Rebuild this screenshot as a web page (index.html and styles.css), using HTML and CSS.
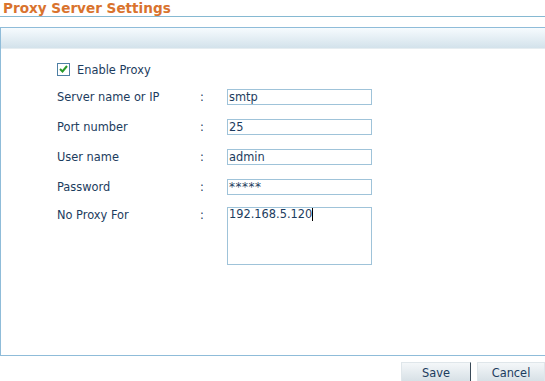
FILE: index.html
```html
<!DOCTYPE html>
<html>
<head>
<meta charset="utf-8">
<link rel="stylesheet" href="styles.css">
</head>
<body>
<div class="title">Proxy Server Settings</div>
<div class="panel">
  <div class="panel-head"></div>
  <div class="panel-body">
    <label class="enable">
      <span class="cb"><svg width="9" height="8" viewBox="0 0 9 8"><path d="M1 4 L3.5 6.5 L8 1" fill="none" stroke="#2a9a2a" stroke-width="2"/></svg></span>
      <span>Enable Proxy</span>
    </label>
    <div class="form">
      <div class="lbl">Server name or IP</div><div class="colon">:</div><div class="field">smtp</div>
      <div class="lbl">Port number</div><div class="colon">:</div><div class="field">25</div>
      <div class="lbl">User name</div><div class="colon">:</div><div class="field">admin</div>
      <div class="lbl">Password</div><div class="colon">:</div><div class="field pw">*****</div>
      <div class="lbl top">No Proxy For</div><div class="colon top">:</div><div class="field area">192.168.5.120<span class="caret"></span></div>
    </div>
  </div>
</div>
<div class="buttons">
  <button class="btn save">Save</button>
  <button class="btn">Cancel</button>
</div>
</body>
</html>
```
FILE: styles.css
```css
html, body {
  margin: 0;
  padding: 0;
  background: #fff;
  font-family: "DejaVu Sans", Verdana, sans-serif;
  font-size: 11.4px;
  color: #1c3c5e;
  overflow: hidden;
}
.title {
  height: 17px;
  border-bottom: 1px solid #86b9d2;
  color: #d9732e;
  font-weight: bold;
  font-size: 13.6px;
  line-height: 16px;
  padding-left: 3px;
  box-sizing: border-box;
  margin-bottom: 10px;
}
.panel {
  border: 1px solid #8fbcd9;
  border-right: none;
  height: 329px;
  box-sizing: border-box;
}
.panel-head {
  height: 20px;
  background: linear-gradient(#f6fbfe, #d3e2eb);
  border-bottom: 1px solid #e6edf1;
}
.panel-body {
  padding: 14px 0 0 56px;
}
.enable {
  display: flex;
  align-items: center;
  gap: 7px;
  height: 12px;
  margin-bottom: 14px;
}
.enable span:last-child {
  padding-top: 2px;
}
.cb {
  width: 11px;
  height: 11px;
  border: 1px solid #4e7fa4;
  background: #fff;
  display: flex;
  align-items: center;
  justify-content: center;
}
.form {
  display: grid;
  grid-template-columns: 143px 27px 145px;
  grid-auto-rows: 16px;
  row-gap: 14px;
}
.lbl, .colon {
  line-height: 17px;
}
.lbl.top, .colon.top {
  line-height: 12px;
}
.field {
  border: 1px solid #9fc3d9;
  box-sizing: border-box;
  height: 16px;
  line-height: 14px;
  padding-left: 1px;
  background: #fff;
  white-space: nowrap;
}
.field.pw {
  font-size: 12px;
  letter-spacing: 0.5px;
}
.field.area {
  height: 58px;
  margin-top: -2px;
  line-height: 13px;
}
.caret {
  display: inline-block;
  width: 1px;
  height: 13px;
  background: #000;
  vertical-align: top;
}
.buttons {
  display: flex;
  justify-content: flex-end;
  gap: 6px;
  padding-top: 6px;
}
.btn {
  font-family: "DejaVu Sans", Verdana, sans-serif;
  font-size: 11.4px;
  color: #1c3c5e;
  height: 22px;
  border: 1px solid #dfe6ea;
  background: linear-gradient(#f4f7f9, #d4dee4);
  padding: 0;
  line-height: 20px;
  padding-bottom: 3px;
}
.btn.save {
  width: 70px;
  border-right: 1px solid #3a4a58;
}
.btn:last-child {
  width: 68px;
}
```
